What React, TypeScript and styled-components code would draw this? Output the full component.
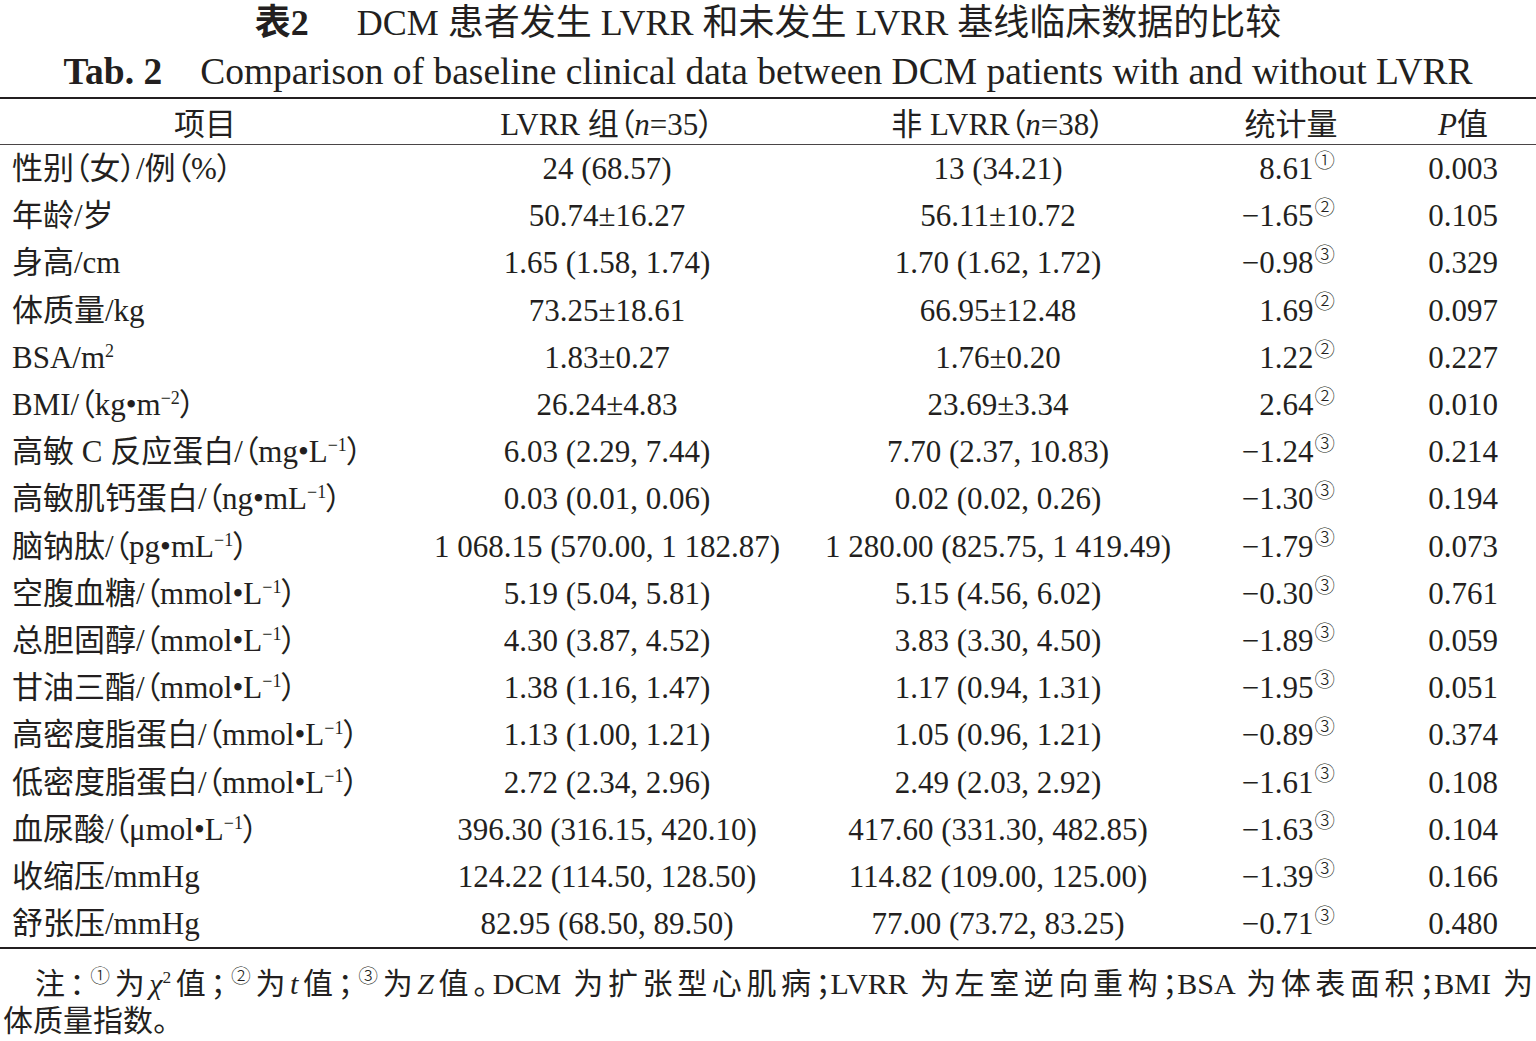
import React from "react";
import styled, { createGlobalStyle } from "styled-components";

const GlobalStyle = createGlobalStyle`
  html, body {
    margin: 0;
    padding: 0;
    background: #ffffff;
  }
  body {
    color: #231f20;
    font-family: "Liberation Serif", "Noto Sans CJK SC", serif;
  }
`;

const Page = styled.div`
  width: 1536px;
  overflow: hidden;
`;

const Caption = styled.div<{ $lh: number; $size: number }>`
  text-align: center;
  font-family: "Liberation Serif", "Noto Sans CJK SC", serif;
  font-size: ${(p) => p.$size}px;
  line-height: ${(p) => p.$lh}px;
  white-space: nowrap;
  font-feature-settings: "palt";
`;

const CaptionNo = styled.b<{ $gap: number }>`
  font-weight: 700;
  margin-right: ${(p) => p.$gap}px;
`;

const Table = styled.table`
  width: 100%;
  table-layout: fixed;
  border-collapse: separate;
  border-spacing: 0;
  border-top: 2.5px solid #231f20;
  border-bottom: 2.5px solid #231f20;
  font-size: 31px;
  font-feature-settings: "palt";
`;

const Col = styled.col<{ $w: number }>`
  width: ${(p) => p.$w}px;
`;

const HeadCell = styled.th`
  height: 45px;
  padding: 0;
  font-weight: 400;
  text-align: center;
  white-space: nowrap;
  border-bottom: 1px solid #4a4546;
`;

const Cell = styled.td<{ $align: "left" | "center" | "right" }>`
  height: 47.2px;
  padding: 0 ${(p) => (p.$align === "right" ? "55px" : "0")} 0
    ${(p) => (p.$align === "left" ? "12px" : "0")};
  text-align: ${(p) => p.$align};
  white-space: nowrap;
  line-height: 1;
`;

const Sup = styled.sup`
  font-size: 0.58em;
  vertical-align: 0.62em;
  line-height: 0;
`;

const Mark = styled.span`
  font-family: "Noto Sans CJK SC", "DejaVu Sans", sans-serif;
  font-weight: 300;
  font-size: 0.66em;
  vertical-align: 0.55em;
  line-height: 0;
  margin-left: 1px;
`;

const Ital = styled.i`
  font-style: italic;
  font-family: "Liberation Serif", serif;
`;

const Note = styled.div`
  margin-top: 16px;
  padding: 0 3px;
  font-size: 30px;
  line-height: 37px;
  font-feature-settings: "palt";
`;

const NoteLine = styled.div<{ $first?: boolean }>`
  text-indent: ${(p) => (p.$first ? "32px" : "0")};
  text-align: justify;
  text-align-last: ${(p) => (p.$first ? "justify" : "left")};
  white-space: ${(p) => (p.$first ? "normal" : "nowrap")};
`;

const marks = ["", "①", "②", "③"];

type Row = {
  label: React.ReactNode;
  a: string;
  b: string;
  stat: string;
  mark: number;
  p: string;
};

const unit = (base: string, sup: string) => (
  <>
    {base}
    <Sup>{sup}</Sup>）
  </>
);

const rows: Row[] = [
  { label: "性别（女）/例（%）", a: "24 (68.57)", b: "13 (34.21)", stat: "8.61", mark: 1, p: "0.003" },
  { label: "年龄/岁", a: "50.74±16.27", b: "56.11±10.72", stat: "−1.65", mark: 2, p: "0.105" },
  { label: "身高/cm", a: "1.65 (1.58, 1.74)", b: "1.70 (1.62, 1.72)", stat: "−0.98", mark: 3, p: "0.329" },
  { label: "体质量/kg", a: "73.25±18.61", b: "66.95±12.48", stat: "1.69", mark: 2, p: "0.097" },
  { label: <>BSA/m<Sup>2</Sup></>, a: "1.83±0.27", b: "1.76±0.20", stat: "1.22", mark: 2, p: "0.227" },
  { label: unit("BMI/（kg•m", "−2"), a: "26.24±4.83", b: "23.69±3.34", stat: "2.64", mark: 2, p: "0.010" },
  { label: unit("高敏 C 反应蛋白/（mg•L", "−1"), a: "6.03 (2.29, 7.44)", b: "7.70 (2.37, 10.83)", stat: "−1.24", mark: 3, p: "0.214" },
  { label: unit("高敏肌钙蛋白/（ng•mL", "−1"), a: "0.03 (0.01, 0.06)", b: "0.02 (0.02, 0.26)", stat: "−1.30", mark: 3, p: "0.194" },
  { label: unit("脑钠肽/（pg•mL", "−1"), a: "1 068.15 (570.00, 1 182.87)", b: "1 280.00 (825.75, 1 419.49)", stat: "−1.79", mark: 3, p: "0.073" },
  { label: unit("空腹血糖/（mmol•L", "−1"), a: "5.19 (5.04, 5.81)", b: "5.15 (4.56, 6.02)", stat: "−0.30", mark: 3, p: "0.761" },
  { label: unit("总胆固醇/（mmol•L", "−1"), a: "4.30 (3.87, 4.52)", b: "3.83 (3.30, 4.50)", stat: "−1.89", mark: 3, p: "0.059" },
  { label: unit("甘油三酯/（mmol•L", "−1"), a: "1.38 (1.16, 1.47)", b: "1.17 (0.94, 1.31)", stat: "−1.95", mark: 3, p: "0.051" },
  { label: unit("高密度脂蛋白/（mmol•L", "−1"), a: "1.13 (1.00, 1.21)", b: "1.05 (0.96, 1.21)", stat: "−0.89", mark: 3, p: "0.374" },
  { label: unit("低密度脂蛋白/（mmol•L", "−1"), a: "2.72 (2.34, 2.96)", b: "2.49 (2.03, 2.92)", stat: "−1.61", mark: 3, p: "0.108" },
  { label: unit("血尿酸/（μmol•L", "−1"), a: "396.30 (316.15, 420.10)", b: "417.60 (331.30, 482.85)", stat: "−1.63", mark: 3, p: "0.104" },
  { label: "收缩压/mmHg", a: "124.22 (114.50, 128.50)", b: "114.82 (109.00, 125.00)", stat: "−1.39", mark: 3, p: "0.166" },
  { label: "舒张压/mmHg", a: "82.95 (68.50, 89.50)", b: "77.00 (73.72, 83.25)", stat: "−0.71", mark: 3, p: "0.480" },
];

export default function App() {
  return (
    <Page>
      <GlobalStyle />
      <Caption $lh={46} $size={36}>
        <CaptionNo $gap={48}>表2</CaptionNo>DCM 患者发生 LVRR 和未发生 LVRR 基线临床数据的比较
      </Caption>
      <Caption $lh={51} $size={37.5}>
        <CaptionNo $gap={38}>Tab. 2</CaptionNo>Comparison of baseline clinical data between DCM patients with and without LVRR
      </Caption>
      <Table>
        <colgroup>
          <Col $w={410} />
          <Col $w={394} />
          <Col $w={388} />
          <Col $w={198} />
          <Col $w={146} />
        </colgroup>
        <thead>
          <tr>
            <HeadCell>项目</HeadCell>
            <HeadCell>
              LVRR 组（<Ital>n</Ital>=35）
            </HeadCell>
            <HeadCell>
              非 LVRR（<Ital>n</Ital>=38）
            </HeadCell>
            <HeadCell>统计量</HeadCell>
            <HeadCell>
              <Ital>P</Ital>值
            </HeadCell>
          </tr>
        </thead>
        <tbody>
          {rows.map((r, i) => (
            <tr key={i}>
              <Cell $align="left">{r.label}</Cell>
              <Cell $align="center">{r.a}</Cell>
              <Cell $align="center">{r.b}</Cell>
              <Cell $align="right">
                {r.stat}
                <Mark>{marks[r.mark]}</Mark>
              </Cell>
              <Cell $align="center">{r.p}</Cell>
            </tr>
          ))}
        </tbody>
      </Table>
      <Note>
        <NoteLine $first>
          注：<Mark>①</Mark>为<Ital>χ</Ital>
          <Sup>2</Sup>值；<Mark>②</Mark>为<Ital>t</Ital>值；<Mark>③</Mark>为<Ital>Z</Ital>值。DCM 为扩张型心肌病；LVRR 为左室逆向重构；BSA 为体表面积；BMI 为
        </NoteLine>
        <NoteLine>体质量指数。</NoteLine>
      </Note>
    </Page>
  );
}
